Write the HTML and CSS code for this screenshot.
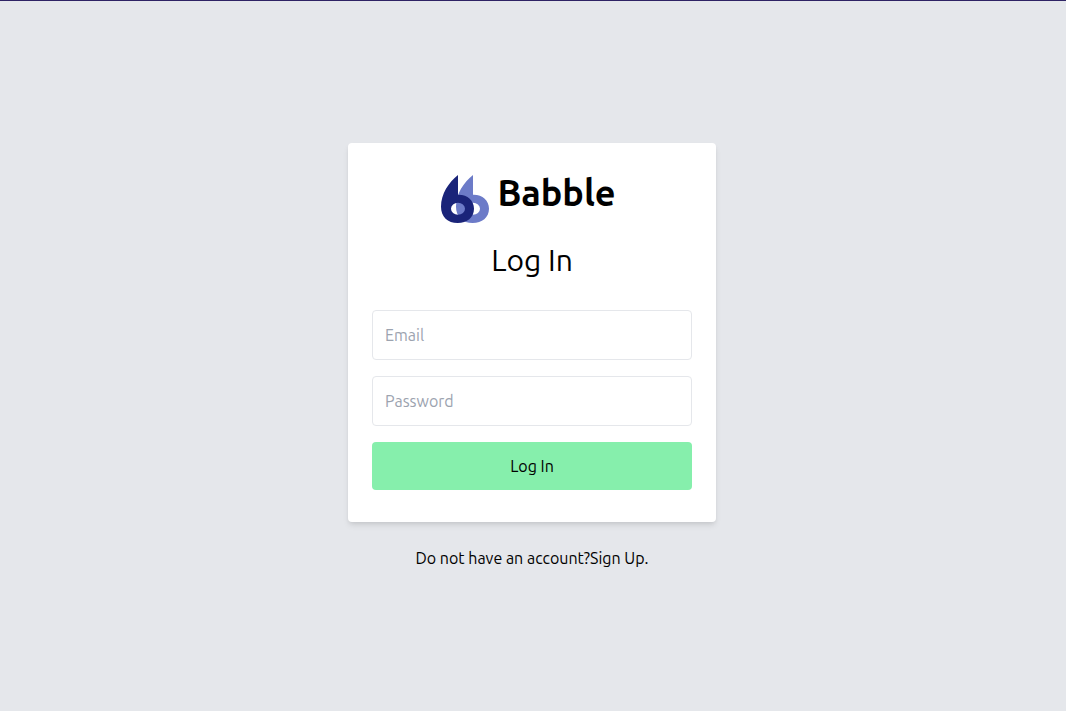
FILE: index.html
```html
<!DOCTYPE html>
<html lang="en">
<head>
<meta charset="utf-8">
<meta name="viewport" content="width=device-width, initial-scale=1">
<title>Babble</title>
<link rel="stylesheet" href="styles.css">
</head>
<body class="page">
<main class="login">
  <form class="card">
    <div class="brand">
      <svg class="brand-logo" viewBox="0 0 144 144" aria-hidden="true">
        <path class="logo-back" fill-rule="evenodd" d="M96 0V59C124 58 144 76 144 101C144 127 123 144 95 144C65 144 45 125 45 95C45 57 68 22 96 0ZM96 83A21 18 0 1 0 96 119A21 18 0 1 0 96 83Z"/>
        <path class="logo-front" fill-rule="evenodd" d="M51 0V59C79 58 99 76 99 101C99 127 78 144 50 144C20 144 0 125 0 95C0 57 23 22 51 0ZM51 83A21 18 0 1 0 51 119A21 18 0 1 0 51 83Z"/>
      </svg>
      <h1 class="brand-name">Babble</h1>
    </div>
    <h2 class="title">Log In</h2>
    <input class="field" type="email" placeholder="Email" aria-label="Email">
    <input class="field" type="password" placeholder="Password" aria-label="Password">
    <button class="submit" type="submit">Log In</button>
  </form>
  <p class="signup">Do not have an account?<a class="signup-link" href="#">Sign Up.</a></p>
</main>
</body>
</html>
```
FILE: styles.css
```css
*, *::before, *::after {
  box-sizing: border-box;
}

.page {
  margin: 0;
  padding-right: 2px;
  min-height: 100vh;
  display: flex;
  border-top: 1px solid #2e2364;
  background: #e5e7eb;
  color: #000;
  font: 16px/24px Ubuntu, "Noto Sans", sans-serif;
}

.login {
  flex: 1;
  display: flex;
  flex-direction: column;
  align-items: center;
  justify-content: center;
  gap: 24px;
}

.card {
  width: 100%;
  max-width: 368px;
  padding: 32px 24px;
  display: flex;
  flex-direction: column;
  gap: 16px;
  border-radius: 4px;
  background: #fff;
  box-shadow: 0 4px 6px -1px rgba(0, 0, 0, 0.1), 0 2px 4px -1px rgba(0, 0, 0, 0.06);
}

.brand {
  display: flex;
  justify-content: center;
}

.brand-logo {
  width: 48px;
  height: 48px;
}

.logo-back {
  fill: #6c7bc8;
}

.logo-front {
  fill: #1a2479;
}

.brand-name {
  margin: 0 7px 0 8px;
  font-size: 36px;
  line-height: 36px;
  font-weight: 700;
}

.title {
  margin: 3px 0 16px;
  text-align: center;
  font-size: 30px;
  line-height: 36px;
  font-weight: 400;
}

.field {
  width: 100%;
  height: 50px;
  padding: 12px;
  border: 1px solid #e5e7eb;
  border-radius: 4px;
  background: #fff;
  color: inherit;
  font: inherit;
}

.field::placeholder {
  color: #9ca3af;
  opacity: 1;
}

.submit {
  width: 100%;
  padding: 12px;
  border: 0;
  border-radius: 4px;
  background: #86efac;
  color: inherit;
  font: inherit;
  cursor: pointer;
}

.signup {
  margin: 0;
}

.signup-link {
  color: inherit;
  text-decoration: none;
}
```
